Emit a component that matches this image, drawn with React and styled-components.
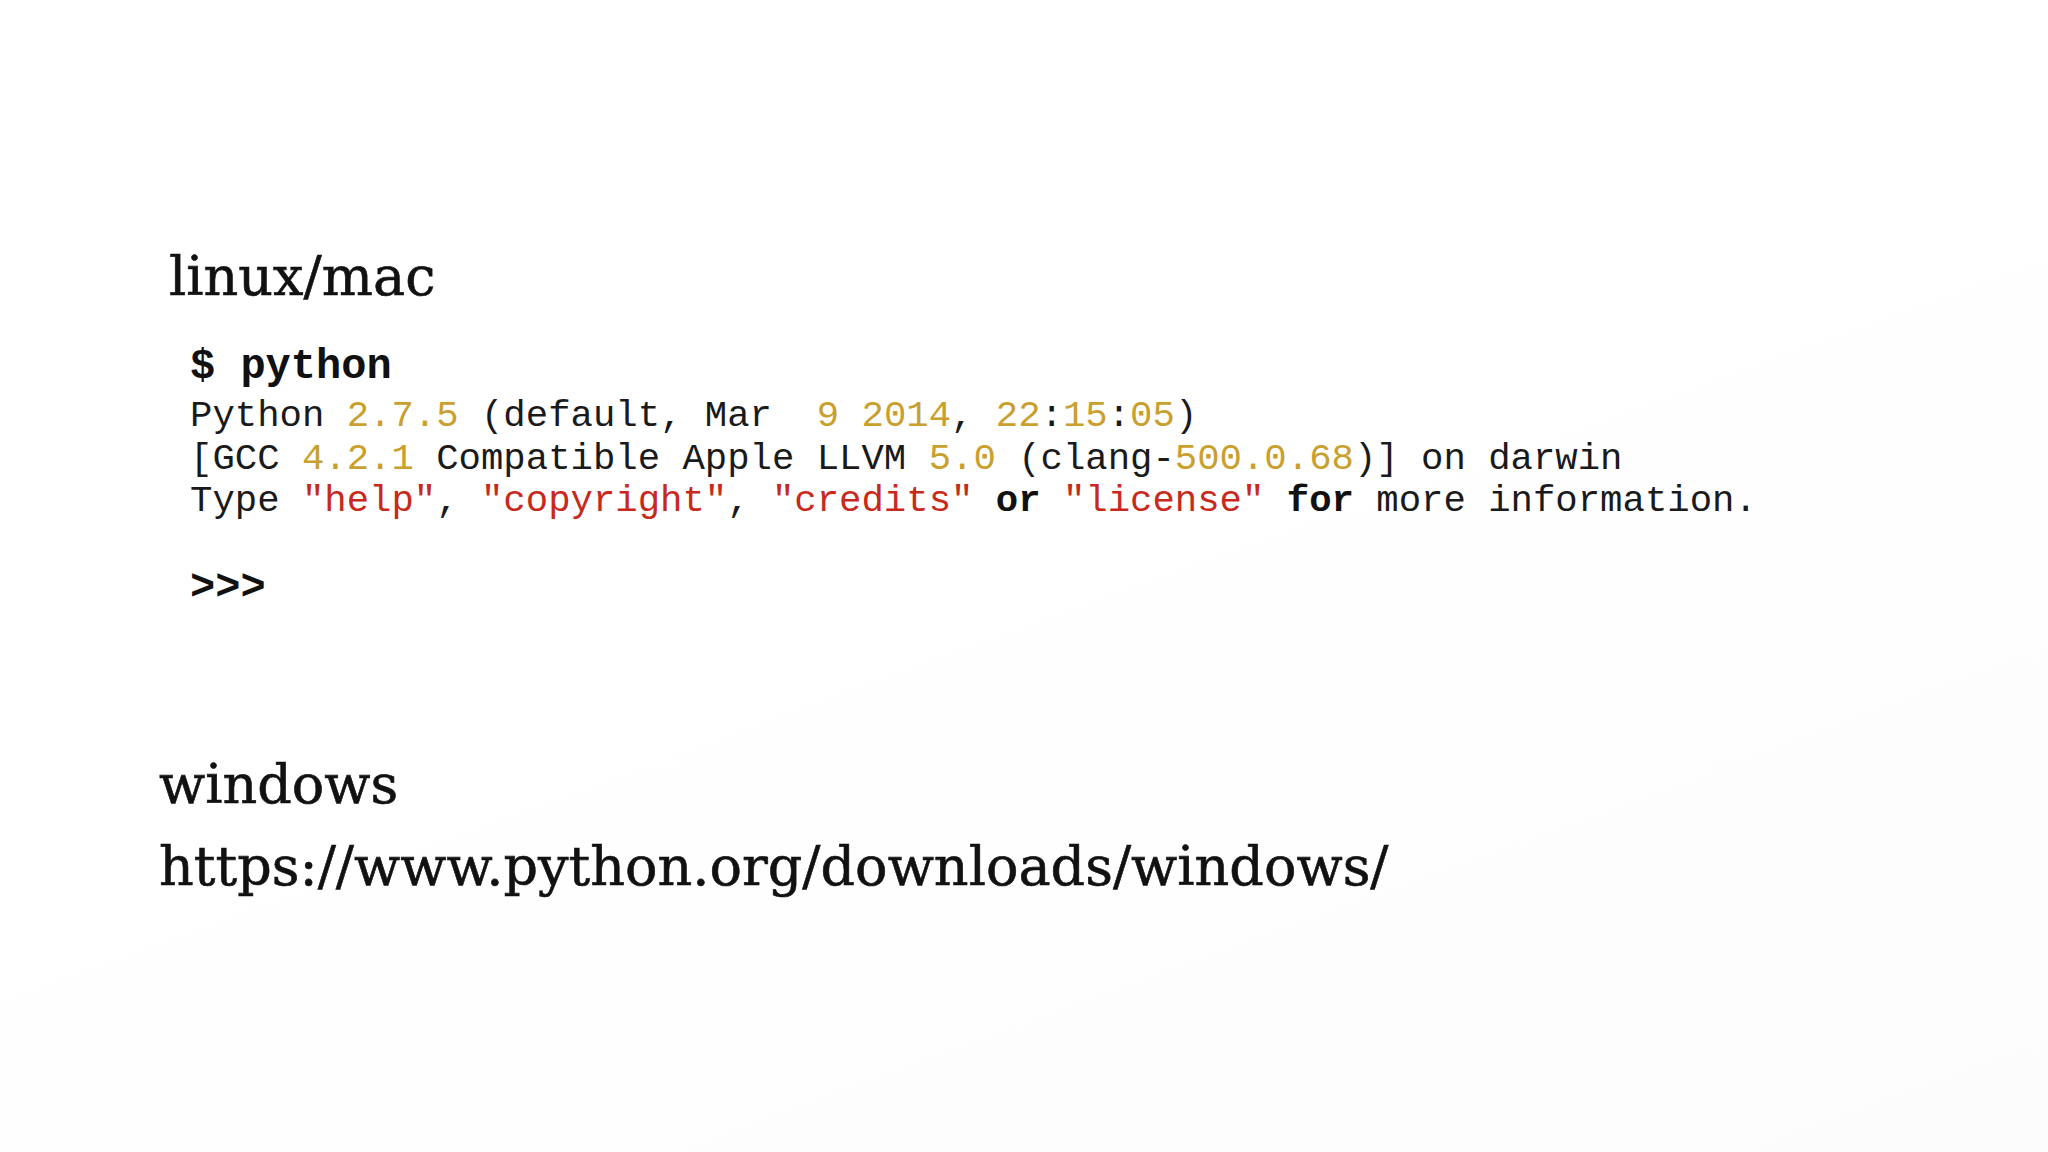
import React from "react";
import styled, { createGlobalStyle } from "styled-components";

const Global = createGlobalStyle`
  html, body { margin: 0; padding: 0; background: #ffffff; }
  body { width: 2048px; height: 1152px; overflow: hidden; }
`;

const Slide = styled.main`
  width: 2048px;
  height: 1152px;
  box-sizing: border-box;
  padding-top: 246px;
  background: linear-gradient(160deg, #ffffff 0%, #ffffff 45%, #fcfcfc 100%);
  display: flex;
  flex-direction: column;
`;

const Section = styled.section`
  display: flex;
  flex-direction: column;
  padding-left: ${(p) => p.$left}px;
  margin-top: ${(p) => p.$top || 0}px;
`;

const Heading = styled.h2`
  margin: 0;
  font-family: "DejaVu Serif", "Liberation Serif", serif;
  font-weight: normal;
  font-size: 54px;
  line-height: 61px;
  color: #111111;
  -webkit-text-stroke: 0.6px #111111;
  margin-top: ${(p) => p.$top || 0}px;
`;

const Terminal = styled.div`
  display: flex;
  flex-direction: column;
  margin-top: 35px;
  padding-left: ${(p) => p.$indent}px;
  font-family: "Liberation Mono", "Courier New", monospace;
  color: #1a1a1a;
`;

const Prompt = styled.div`
  font-size: 42px;
  line-height: 50px;
  font-weight: bold;
  color: #111111;
  white-space: pre;
  margin-top: ${(p) => p.$top || 0}px;
`;

const Output = styled.div`
  margin-top: 3px;
  font-size: 37.3px;
  line-height: 42.5px;
  white-space: pre;
`;

const Line = styled.div``;

const Num = styled.span`
  color: #c9a02e;
`;

const Str = styled.span`
  color: #c8291c;
`;

const Kw = styled.span`
  font-weight: bold;
  color: #111111;
`;

export default function App() {
  return (
    <>
      <Global />
      <Slide>
        <Section $left={169}>
          <Heading>linux/mac</Heading>
          <Terminal $indent={21}>
            <Prompt>$ python</Prompt>
            <Output>
              <Line>
                Python <Num>2.7.5</Num> (default, Mar  <Num>9</Num> <Num>2014</Num>, <Num>22</Num>:<Num>15</Num>:<Num>05</Num>)
              </Line>
              <Line>
                [GCC <Num>4.2.1</Num> Compatible Apple LLVM <Num>5.0</Num> (clang-<Num>500.0.68</Num>)] on darwin
              </Line>
              <Line>
                Type <Str>"help"</Str>, <Str>"copyright"</Str>, <Str>"credits"</Str> <Kw>or</Kw> <Str>"license"</Str> <Kw>for</Kw> more information.
              </Line>
            </Output>
            <Prompt $top={40}>{">>>"}</Prompt>
          </Terminal>
        </Section>
        <Section $left={159} $top={141}>
          <Heading>windows</Heading>
          <Heading $top={21}>https://www.python.org/downloads/windows/</Heading>
        </Section>
      </Slide>
    </>
  );
}
